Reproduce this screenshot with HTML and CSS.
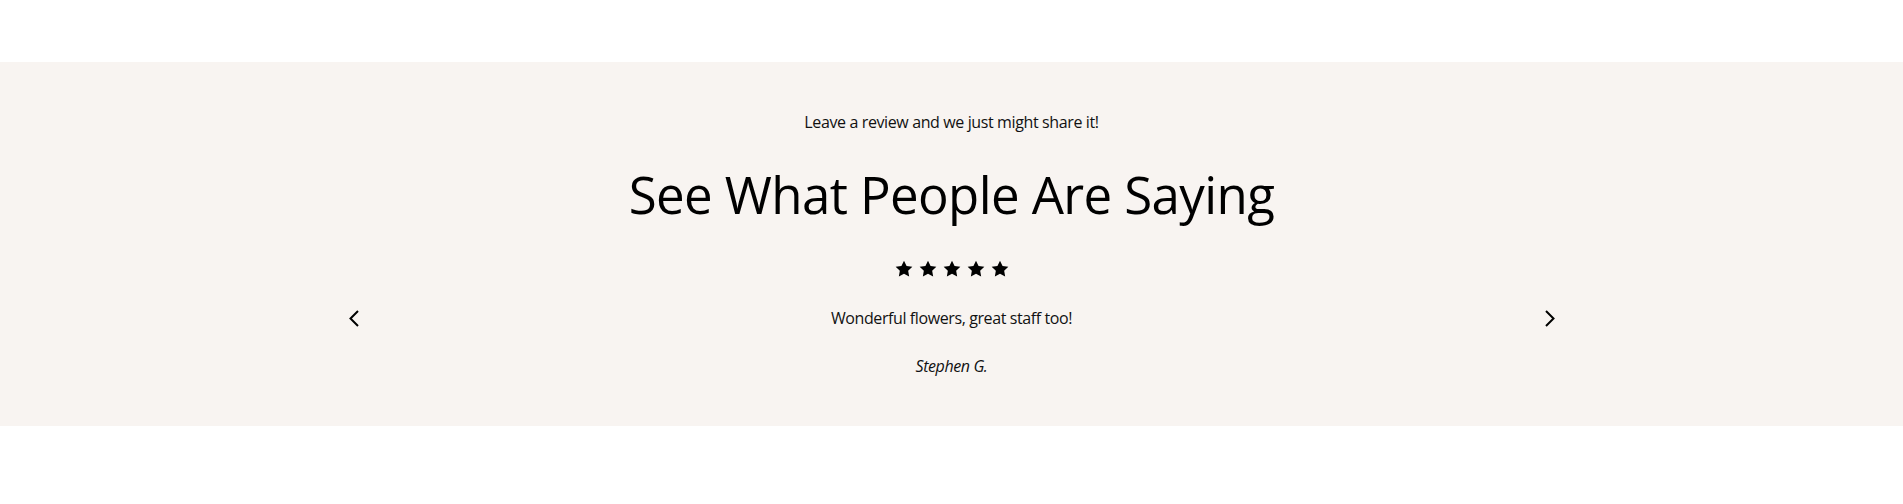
FILE: index.html
```html
<!DOCTYPE html>
<html lang="en">
<head>
<meta charset="utf-8">
<title>Testimonials</title>
<link rel="stylesheet" href="styles.css">
</head>
<body>
<section class="reviews">
  <p class="reviews__eyebrow">Leave a review and we just might share it!</p>
  <h2 class="reviews__title">See What People Are Saying</h2>
  <div class="carousel">
    <button class="carousel__btn" aria-label="Previous">
      <svg width="10" height="17" viewBox="0 0 10 17"><path d="M9 1 L1.5 8.5 L9 16" fill="none" stroke="#000" stroke-width="2"/></svg>
    </button>
    <div class="slide">
      <div class="slide__stars">
        <svg class="star" viewBox="0 0 24 24"><path d="M12 2l3.09 6.26L22 9.27l-5 4.87 1.18 6.88L12 17.77l-6.18 3.25L7 14.14 2 9.27l6.91-1.01z"/></svg>
        <svg class="star" viewBox="0 0 24 24"><path d="M12 2l3.09 6.26L22 9.27l-5 4.87 1.18 6.88L12 17.77l-6.18 3.25L7 14.14 2 9.27l6.91-1.01z"/></svg>
        <svg class="star" viewBox="0 0 24 24"><path d="M12 2l3.09 6.26L22 9.27l-5 4.87 1.18 6.88L12 17.77l-6.18 3.25L7 14.14 2 9.27l6.91-1.01z"/></svg>
        <svg class="star" viewBox="0 0 24 24"><path d="M12 2l3.09 6.26L22 9.27l-5 4.87 1.18 6.88L12 17.77l-6.18 3.25L7 14.14 2 9.27l6.91-1.01z"/></svg>
        <svg class="star" viewBox="0 0 24 24"><path d="M12 2l3.09 6.26L22 9.27l-5 4.87 1.18 6.88L12 17.77l-6.18 3.25L7 14.14 2 9.27l6.91-1.01z"/></svg>
      </div>
      <p class="slide__text">Wonderful flowers, great staff too!</p>
      <p class="slide__author">Stephen G.</p>
    </div>
    <button class="carousel__btn" aria-label="Next">
      <svg width="10" height="17" viewBox="0 0 10 17"><path d="M1 1 L8.5 8.5 L1 16" fill="none" stroke="#000" stroke-width="2"/></svg>
    </button>
  </div>
</section>
</body>
</html>
```
FILE: styles.css
```css
html, body {
  margin: 0;
  padding: 0;
  background: #ffffff;
}
body {
  font-family: "Open Sans", "Noto Sans", sans-serif;
  color: #111;
}
.reviews {
  margin-top: 62px;
  background: #f8f4f1;
  padding: 48px 0 48px;
  text-align: center;
}
.reviews__eyebrow {
  margin: 0;
  font-size: 16px;
  line-height: 24px;
  letter-spacing: -0.38px;
}
.reviews__title {
  margin: 30px 0 0;
  font-size: 51px;
  line-height: 61px;
  font-weight: 400;
  letter-spacing: -0.6px;
  color: #000;
}
.carousel {
  width: 1216px;
  margin: 34px auto 0;
  display: flex;
  align-items: center;
  justify-content: space-between;
}
.carousel__btn {
  width: 20px;
  height: 30px;
  padding: 0;
  border: 0;
  background: transparent;
  display: flex;
  align-items: center;
  justify-content: center;
  cursor: pointer;
}
.slide {
  flex: 1;
  display: flex;
  flex-direction: column;
  align-items: center;
}
.slide__stars {
  display: flex;
  gap: 4px;
  height: 20px;
}
.star {
  width: 20px;
  height: 20px;
  fill: #000;
}
.slide__text {
  margin: 27px 0 0;
  font-size: 16px;
  line-height: 24px;
  letter-spacing: -0.4px;
}
.slide__author {
  margin: 24px 0 0;
  font-size: 16px;
  line-height: 24px;
  font-style: italic;
  letter-spacing: -0.4px;
}
```
